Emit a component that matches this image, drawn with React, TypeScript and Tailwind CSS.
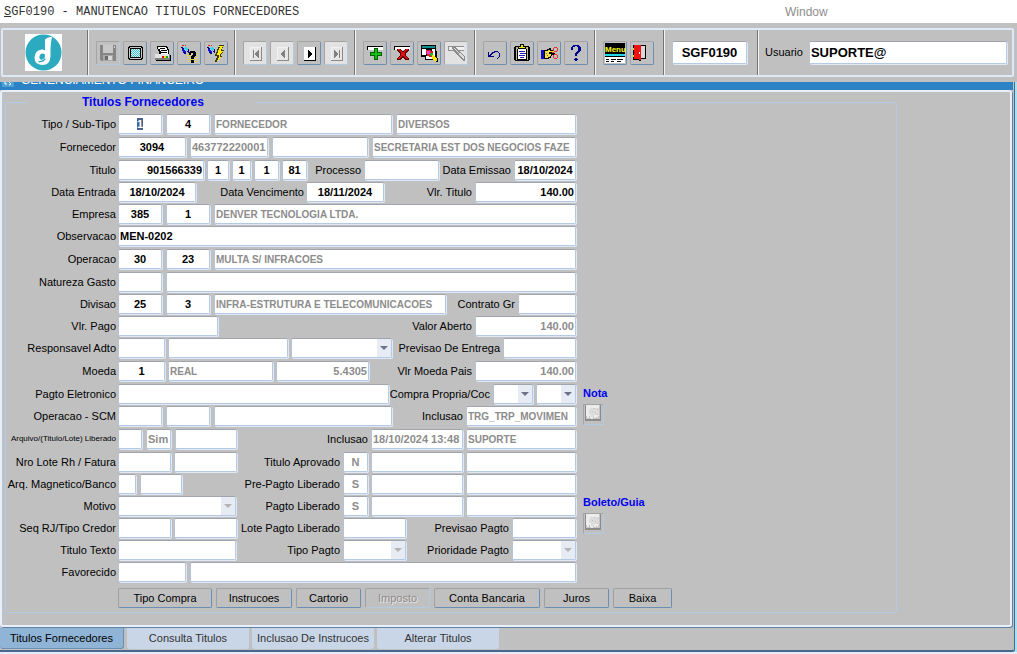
import React, { useEffect, useRef } from "react";

const sans = "font-['Liberation_Sans',Arial,sans-serif]";

const box =
  "h-5 min-w-0 rounded-[2px] border border-t-[#9fa4ad] border-l-[#b4c4d8] border-r-[#b4cae4] border-b-[#b4cae4] bg-white shadow-[1px_1px_0_#dfe8f4]";

type FieldProps = {
  id?: string;
  label?: string;
  w: string;
  value?: string;
  align?: "left" | "center" | "right";
  muted?: boolean;
  name?: boolean;
  inputRef?: React.Ref<HTMLInputElement>;
};

function Field({ id, label, w, value = "", align = "left", muted, name, inputRef }: FieldProps) {
  const a = align === "center" ? "text-center" : align === "right" ? "text-right" : "text-left";
  return (
    <input
      ref={inputRef}
      id={id}
      aria-label={label}
      type="text"
      defaultValue={value}
      readOnly={muted || name}
      className={`${box} ${w} ${a} ${muted || name ? "text-[#8c8c8c]" : "text-black"} ${name ? "text-[10px]" : "text-[11px]"} px-px leading-[15px] font-bold outline-none selection:bg-[#46628f] selection:text-white`}
    />
  );
}

function Drop({ id, label, w, off }: { id?: string; label?: string; w: string; off?: boolean }) {
  return (
    <span className={`relative flex ${w}`}>
      <select
        id={id}
        aria-label={label}
        disabled={off}
        className={`${box} w-full appearance-none border-r-[#9fa4ad] border-b-[#9fa4ad] opacity-100`}
      >
        <option></option>
      </select>
      <span className="pointer-events-none absolute inset-y-px right-px flex w-[14px] items-center justify-center bg-[#e6ebf4]">
        <svg width="8" height="4" viewBox="0 0 8 4">
          <path d="M0 0h8L4 4z" fill={off ? "#b4b4b4" : "#6c7088"} />
        </svg>
      </span>
    </span>
  );
}

function Lab({ to, w = "", children }: { to: string; w?: string; children: React.ReactNode }) {
  return (
    <label htmlFor={to} className={`${w} shrink-0 text-right text-[11px] leading-5 whitespace-nowrap text-black`}>
      {children}
    </label>
  );
}

type RowProps = {
  to: string;
  label: string;
  tall?: boolean;
  small?: boolean;
  gap?: string;
  children: React.ReactNode;
  right?: React.ReactNode;
};

function Row({ to, label, tall, small, gap = "gap-1", children, right }: RowProps) {
  return (
    <div className={`flex items-start gap-[2px] ${tall ? "h-[23px]" : "h-[22px]"}`}>
      <label
        htmlFor={to}
        className={`w-[110px] shrink-0 text-right leading-5 whitespace-nowrap text-black ${small ? "text-[8px]" : "text-[11px]"}`}
      >
        {label}
      </label>
      <div className="flex min-w-0 flex-1 justify-between">
        <div className={`flex ${right ? "" : "min-w-0 flex-1"} ${gap}`}>{children}</div>
        {right && <div className="flex gap-[3px]">{right}</div>}
      </div>
    </div>
  );
}

function Tool({ label, off, pale, children }: { label: string; off?: boolean; pale?: boolean; children: React.ReactNode }) {
  return (
    <button
      type="button"
      aria-label={label}
      disabled={off}
      className={`flex size-6 items-center justify-center rounded-[2px] border border-t-[#a4a4a4] border-l-[#a4a4a4] ${off ? "border-r-[#b4cae4] border-b-[#b4cae4]" : "border-r-[#6a8eb4] border-b-[#6a8eb4]"} ${pale ? "bg-[#e2e2e2]" : "bg-[#c0c0c0]"}`}
    >
      <svg className="size-6 shrink-0" viewBox="0 0 24 24" shapeRendering="crispEdges">
        {children}
      </svg>
    </button>
  );
}

function Group({ pad = "pr-[6px]", children }: { pad?: string; children: React.ReactNode }) {
  return (
    <div className={`mr-px flex items-center gap-[3px] border-r border-r-[#747474] pl-[7px] ${pad} shadow-[1px_0_0_#f4f4f4]`}>
      {children}
    </div>
  );
}

function NavTile({ off, children }: { off?: boolean; children: React.ReactNode }) {
  return (
    <>
      <path d="M7 6h12v14H7z" fill={off ? "#8a8a8a" : "#000"} />
      <path d="M7 6h11v13H7z" fill={off ? "#f2f2f2" : "#fff"} />
      <path d="M8 7h10v12H8z" fill={off ? "#e6e6e6" : "#fff"} />
      <g fill={off ? "#808080" : "#000"}>{children}</g>
    </>
  );
}

function Torch({ x = 0 }: { x?: number }) {
  return (
    <g transform={`translate(${x} 0)`}>
      <path d="M5 4h2v1H5z M8 4h1v1H8z" fill="#e02020" />
      <path d="M4 6h2v1h1v1H5V7H4z" fill="#000080" />
      <path d="M8 6h2v1h1v2h-1v1H9V9H8V8H7V7h1z" fill="#30d8f0" />
      <path d="M5 8h2v1h1v1h1v2H8v-1H6v-1H5z" fill="#1010e0" />
      <path d="M11 8h1v4h-1v-1h-1v-1h1z M6 11h2v1h1v1H7v-1H6z" fill="#000080" />
    </g>
  );
}

function Blotch() {
  return (
    <svg className="h-[17px] w-[17px] shrink-0" viewBox="0 0 17 17" shapeRendering="crispEdges">
      <path d="M1 0h16v16H1z" fill="#8c8c8c" />
      <path d="M2 0h14v14H2z" fill="#c4c4c4" />
      <path d="M2 0h13v11h-1v2h-1v-1h-1v1h-2v-1H9v2H7v-1H6v-2H5v2H3v-2H2z" fill="#ececec" />
      <path d="M6 3h9v7h-5v2H7V9H5V5h1z" fill="#dcdcdc" />
      <path d="M10 3h1v1h-1z M13 4h1v1h-1z M8 6h1v1H8z M11 7h1v1h-1z M13 9h1v1h-1z" fill="#c0c0c0" />
    </svg>
  );
}

function Side({ title }: { title: string }) {
  return (
    <div className="flex flex-col items-start gap-1">
      <span className="text-[11px] leading-[13px] font-bold whitespace-nowrap text-[#0000f0]">{title}</span>
      <button
        type="button"
        aria-label={title}
        className="flex size-[21px] items-start justify-start border border-t-[#a4a4a4] border-l-[#a4a4a4] border-r-[#b4cae4] border-b-[#b4cae4]"
      >
        <Blotch />
      </button>
    </div>
  );
}

const actions = [
  { t: "Tipo Compra", w: "w-[94px]" },
  { t: "Instrucoes", w: "w-[76px]" },
  { t: "Cartorio", w: "w-[65px]" },
  { t: "Imposto", w: "w-[65px]", off: true },
  { t: "Conta Bancaria", w: "w-[106px]" },
  { t: "Juros", w: "w-[65px]" },
  { t: "Baixa", w: "w-[59px]" },
];

const tabs = ["Titulos Fornecedores", "Consulta Titulos", "Inclusao De Instrucoes", "Alterar Titulos"];

function Toolbar() {
  return (
    <div className="mx-px mr-[3px] flex h-[49px] rounded-[2px] border-2 border-[#dfe8f6]">
      <div className="mr-px flex w-[85px] items-center justify-center border-r border-r-[#747474] pr-[3px] shadow-[1px_0_0_#f4f4f4]">
        <svg className="size-[37px] shrink-0" viewBox="0 0 37 37">
          <path d="M0 0h37v37H0z" fill="#fff" />
          <circle cx="18.5" cy="18.5" r="18" fill="#2cabc0" />
          <path
            d="M20 5.500Q22.500 2.500 27 3Q25.500 9 25.500 18V22Q25.500 31 17 31Q9.500 30.500 9.500 23.500Q10 16 17 15.500Q19 15.500 20 16.500ZM20 20.500Q17.500 18.500 15.300 20.500Q13.300 23.500 15.500 25.500Q18 26.500 19.800 23.500Z"
            fill="#fff"
            fillRule="evenodd"
          />
          <path d="M13.500 27.500Q18 28.500 20.300 24.500" stroke="#2cabc0" strokeWidth="1.300" fill="none" />
        </svg>
      </div>
      <Group>
        <Tool label="Salvar" off>
          <path d="M4 4h16v16H5v-1H4z" fill="#868686" />
          <path d="M7 4h10v8H7z" fill="#c8c8c8" />
          <path d="M7 14h10v6H7z" fill="#a8a8a8" />
          <path d="M9 15h3v4H9z" fill="#6c6c6c" />
          <path d="M18 5h1v2h-1z M12 15h4v4h-4z" fill="#d8d8d8" />
        </Tool>
        <Tool label="Tela">
          <path d="M6 5h13v1h1v12h-1v1H6v-1H5V6h1z" fill="#000" />
          <path d="M7 6h11v1h1v10h-1v1H7v-1H6V7h1z" fill="#c8c8c8" />
          <path d="M7 7h11v10H7z" fill="#000" />
          <path d="M8 8h9v8H8z" fill="#d8f0f0" />
          <path d="M8 8.500h9 M8 10.500h9 M8 12.500h9 M8 14.500h9" stroke="#40c0c8" strokeDasharray="1 1" />
          <path d="M9 9.500h8 M9 11.500h8 M9 13.500h8 M9 15.500h8" stroke="#40c0c8" strokeDasharray="1 1" />
        </Tool>
        <Tool label="Imprimir">
          <path d="M7 5h10v1h1v2h1v5H9v-3H8V8H7z" fill="#000" />
          <path d="M8 6h8v1h1v2h1v4h-7v-3h-1V8H8z" fill="#fff" />
          <path d="M10 7h5v1h-5z M11 9h6v1h-6z M11 11h6v1h-6z" fill="#000" />
          <path d="M5 13h15v1h1v5H5z" fill="#808080" />
          <path d="M5 13h14v4H5z" fill="#e4e4e4" />
          <path d="M6 19h15v1H6z M20 14h1v5h-1z" fill="#000" />
          <path d="M12 15h2v2h-2z" fill="#e00000" />
          <path d="M14 15h2v2h-2z" fill="#f0f000" />
          <path d="M16 15h2v2h-2z" fill="#00b000" />
        </Tool>
        <Tool label="Consultar">
          <path
            d="M11 12.500h10 M10 14.500h11 M11 16.500h10 M10 18.500h11 M11 20.500h10"
            stroke="#f0e000"
            strokeDasharray="1 1"
          />
          <Torch />
          <path d="M13 10h5v1h1v4h-1v1h-1v2h-3v-3h1v-1h1v-2h-2v2h-2v-3h1z M14 19h3v3h-3z" fill="#000" />
        </Tool>
        <Tool label="Executar consulta">
          <Torch x={-1} />
          <path
            d="M15 4h5v1h-1v2h-1v2h2v1h-1v2h-1v1h-1v2h1v1h-1v1h-1v1h-1v1h-1v1h-1v1h-2v-2h1v-2h1v-2h-2v-2h1v-2h1V8h1V6h1z"
            fill="#403800"
          />
          <path
            d="M15 5h4v1h-1v2h-1v2h2v1h-1v1h-1v1h-1v3h1v1h-1v1h-1v1h-1v1h-1v-1h1v-2h1v-3h-2v-2h1V9h1V7h1z"
            fill="#ffee00"
          />
        </Tool>
      </Group>
      <Group>
        <Tool label="Primeiro" off pale>
          <NavTile off>
            <path d="M10 9h1v8h-1z M15 9h1v8h-1v-1h-1v-1h-1v-1h-1v-2h1v-1h1v-1h1z" />
          </NavTile>
        </Tool>
        <Tool label="Anterior" off pale>
          <NavTile off>
            <path d="M14 9h1v8h-1v-1h-1v-1h-1v-1h-1v-2h1v-1h1v-1h1z" />
          </NavTile>
        </Tool>
        <Tool label="Proximo">
          <NavTile>
            <path d="M11 9h1v1h1v1h1v1h1v2h-1v1h-1v1h-1v1h-1z" />
          </NavTile>
        </Tool>
        <Tool label="Ultimo" off pale>
          <NavTile off>
            <path d="M15 9h1v8h-1z M10 9h1v1h1v1h1v1h1v2h-1v1h-1v1h-1v1h-1z" />
          </NavTile>
        </Tool>
      </Group>
      <Group>
        <Tool label="Inserir">
          <path d="M4 5h16v4H4z" fill="#000" />
          <path d="M5 6h15v3H5z" fill="#fff" />
          <path d="M11 7h4v4h4v4h-4v4h-4v-4H7v-4h4z" fill="#006000" />
          <path d="M12 8h2v4h4v2h-4v4h-2v-4H8v-2h4z" fill="#10c010" />
        </Tool>
        <Tool label="Excluir">
          <path d="M4 5h16v4H4z" fill="#000" />
          <path d="M5 6h15v3H5z" fill="#fff" />
          <path
            d="M7 8h4v1h1v1h2V9h1V8h4v2h-1v1h-1v1h-1v3h1v1h1v1h1v2h-4v-1h-1v-1h-2v1h-1v1H7v-2h1v-1h1v-1h1v-3H9v-1H8v-1H7z"
            fill="#600000"
          />
          <path
            d="M8 8h2v1h1v1h1v1h2v-1h1V9h1V8h2v1h-1v1h-1v1h-1v4h1v1h1v1h1v1h-2v-1h-1v-1h-1v-1h-2v1h-1v1h-1v1H8v-1h1v-1h1v-1h1v-4h-1v-1H9V9H8z"
            fill="#d81010"
          />
        </Tool>
        <Tool label="Localizar">
          <path d="M4 4h15v6h1v7h-1v2H8v-3H4z" fill="#000" />
          <path d="M5 5h13v2H5z" fill="#109090" />
          <path d="M5 8h4v6H5z M9 15h9v3H9z M15 8h3v8h-3z" fill="#fff" />
          <path d="M9 9h5v1h2v4h-1v2h-3v-1h-2v-2H9z" fill="#e02020" />
          <path d="M10 10h3v3h-3z" fill="#e040e0" />
          <path d="M13 12h3v3h-3z" fill="#20b030" />
          <path d="M15 14h2v1h1v1h1v1h1v3h-3v-1h-1v-1h-1z" fill="#f0e800" />
          <path d="M19 16h1v1h1v4h-2v-1h1v-3h-1z" fill="#000" />
        </Tool>
        <Tool label="Limpar consulta" off pale>
          <path d="M4 5h16v5H4z" fill="#909090" />
          <path d="M5 6h15v3H5z" fill="#f0f0f0" />
          <path
            d="M8 6h4v1h1v1h1v1h1v1h1v1h1v1h1v1h1v1h1v1h1v5h-2v-1h-1v-1h-1v-1h-1v-1h-1v-1h-1v-1h-1v-1h-1v-1h-1v-1h-1v-1h-1v-1H9v-1H8z"
            fill="#8c8c8c"
          />
          <path
            d="M10 7h1v1h1v1h1v1h1v1h1v1h-1v-1h-1v-1h-1V9h-1V8h-1z M15 12h2v1h1v1h1v1h1v3h-1v-1h-1v-1h-1v-1h-1v-1h-1z"
            fill="#dcdcdc"
          />
        </Tool>
      </Group>
      <Group>
        <Tool label="Desfazer">
          <path
            d="M5 11h1v3h1v-1h1v-1h1v-1h2v-1h4v1h1v1h1v4h-1v1h-1v1h-1v-1h1v-1h1v-4h-1v-1h-3v1h-2v1H9v1H8v1h3v1H5z"
            fill="#000080"
          />
        </Tool>
        <Tool label="Area de transferencia">
          <path d="M5 5h14v1h1v13h-1v1H5v-1H4V6h1z" fill="#000" />
          <path d="M6 6h12v13H6z" fill="#c0b890" />
          <path d="M7 8h10v11H7z" fill="#000" />
          <path d="M8 8h8v10H8z" fill="#fff" />
          <path d="M10 3h4v2h2v3H8V5h2z" fill="#000" />
          <path d="M11 4h2v2h2v1H9V6h2z" fill="#f0e800" />
          <path d="M9 10h6v1H9z M10 12h6v1h-6z M9 14h6v1H9z M10 16h4v1h-4z" fill="#2020c0" />
        </Tool>
        <Tool label="Recortar">
          <path d="M4 9h3v9H4z" fill="#1010c0" />
          <path d="M7 9h3V8h2V7h2v2h4v2h-3v1h3v2h-3v1h-1v2h-2v1H7z" fill="#000" />
          <path d="M8 10h3V9h2v1h4v1h-5v2h2v2h-1v1h-2v1H8z" fill="#f0e050" />
          <path d="M9 12h1v1H9z M10 14h1v1h-1z" fill="#907020" />
          <path d="M17 6h3v1h1v3h-1v1h-3v1h-2v-1h2v-1h-1V7h1z M17 13h3v1h1v3h-1v1h-3v-1h-1v-3h1z" fill="#e83030" />
          <path d="M17 7h3v3h-3z M17 14h3v3h-3z" fill="#c0c0c0" />
        </Tool>
        <Tool label="Ajuda">
          <path
            d="M9 4h6v1h1v1h1v4h-1v1h-1v1h-1v1h-1v2h-2v-3h1v-1h1v-1h1V6h-1V5h-2v1H9v3H7V6h1V5h1z M11 17h2v1h1v1h-1v1h-2v-1h-1v-1h1z"
            fill="#000090"
          />
        </Tool>
      </Group>
      <Group pad="pr-[9px]">
        <Tool label="Menu">
          <path d="M2 2h20v12H2z" fill="#000" />
          <path d="M2 14h20v8H2z" fill="#fff" />
          <path d="M2 13h20v2H2z" fill="#20d8e8" />
          <path d="M2 15h20v1H2z" fill="#000" />
          <path d="M3 18h3v1H3z M8 18h5v1H8z M14 18h6v1h-6z M3 20h3v1H3z M8 20h3v1H8z M14 20h4v1h-4z" fill="#000" />
          <text x="2" y="11" fontSize="8" fontWeight="700" fontFamily="Liberation Sans" fill="#ffff00">
            Menu
          </text>
        </Tool>
        <Tool label="Sair">
          <path d="M3 4h13v14h-5v2H9v-1H3z" fill="#000" />
          <path d="M11 5h4v12h-4z" fill="#d8d8d8" />
          <path d="M4 4h7v15H9v-1H4z" fill="#f01010" />
          <path d="M3 7h1v2H3z M3 14h1v2H3z" fill="#f0e000" />
          <path d="M9 11h1v2H9z" fill="#fff" />
        </Tool>
      </Group>
      <div className="mr-px flex items-center border-r border-r-[#747474] pr-[10px] pl-[7px] shadow-[1px_0_0_#f4f4f4]">
        <input
          aria-label="Programa"
          defaultValue="SGF0190"
          className="h-[23px] w-[75px] rounded-[2px] border border-t-[#9fa4ad] border-l-[#b4c4d8] border-r-[#b4cae4] border-b-[#b4cae4] bg-white text-center text-[13px] font-bold text-black shadow-[1px_1px_0_#dfe8f4] outline-none"
        />
      </div>
      <div className="flex min-w-0 flex-1 items-center gap-[6px] pr-[5px] pl-[6px]">
        <label htmlFor="usuario" className="text-[11px] text-black">
          Usuario
        </label>
        <input
          id="usuario"
          defaultValue="SUPORTE@"
          className="h-[23px] min-w-0 flex-1 rounded-[2px] border border-t-[#9fa4ad] border-l-[#b4c4d8] border-r-[#b4cae4] border-b-[#b4cae4] bg-white px-px text-[13px] font-bold text-black shadow-[1px_1px_0_#dfe8f4] outline-none"
        />
      </div>
    </div>
  );
}

export default function App() {
  const first = useRef<HTMLInputElement>(null);
  useEffect(() => {
    first.current?.focus();
    first.current?.select();
  }, []);

  return (
    <div className={`${sans} flex min-h-screen flex-col bg-[#c0c0c0] text-black`}>
      <header className="flex h-[23px] items-center bg-white pl-1">
        <h1 className="w-[781px] font-['Liberation_Mono',monospace] text-[12px] text-[#333333]">
          <u>S</u>GF0190 - MANUTENCAO TITULOS FORNECEDORES
        </h1>
        <span className="text-[12px] text-[#8e8e8e]">Window</span>
      </header>

      <div className="pt-[5px] pb-[5px]">
        <Toolbar />
      </div>

      <div className="flex flex-1 bg-[#a4e4f0]">
        <div className="flex min-w-0 flex-1 flex-col rounded-br-[3px] border-r border-b-2 border-[#4a688f] bg-[#c0c0c0]">
          <div className="mr-px flex h-[8px] items-end gap-[7px] overflow-hidden bg-[#2b82c4] pb-[3px] pl-[2px]">
            <svg className="h-[5px] w-3 shrink-0" viewBox="0 0 12 5">
              <path d="M0 0h12v5H0z" fill="#4fa0d8" />
              <path d="M3 0v2h2M7 0l2 2-2 1" stroke="#fff" fill="none" />
            </svg>
            <span className="text-[12px] leading-[14px] whitespace-nowrap text-white">GERENCIAMENTO FINANCEIRO</span>
          </div>
          <main className="mr-[2px] flex-1 rounded-[3px] border-2 border-[#e9eff9] pt-[2px] shadow-[1px_1px_0_#5f82a8,inset_1px_0_0_#b8c4d4]">
            <fieldset className="ml-[3px] w-[892px] max-w-full rounded-[3px] border border-[#b4cae4] pb-[4px]">
              <legend className="ml-[22px] w-[227px] pl-[54px] text-[12px] leading-4 font-bold text-[#0000f0]">
                Titulos Fornecedores
              </legend>
              <div className="flex gap-[7px] pt-[4px]">
                <div className="w-[570px] shrink-0">
                  <Row to="tipo" label="Tipo / Sub-Tipo" tall>
                    <Field inputRef={first} id="tipo" w="w-11" value="1" align="center" />
                    <Field label="Sub-Tipo" w="w-11" value="4" align="center" />
                    <Field label="Descricao tipo" w="w-[178px]" value="FORNECEDOR" name />
                    <Field label="Descricao sub-tipo" w="flex-1" value="DIVERSOS" name />
                  </Row>
                  <Row to="fornecedor" label="Fornecedor" tall>
                    <Field id="fornecedor" w="w-[68px]" value="3094" align="center" />
                    <Field label="CNPJ" w="w-[78px]" value="4637722200012" muted />
                    <Field label="Inscricao" w="w-[96px]" muted />
                    <Field label="Nome fornecedor" w="flex-1" value="SECRETARIA EST DOS NEGOCIOS FAZE" name />
                  </Row>
                  <Row
                    to="titulo"
                    label="Titulo"
                    gap="gap-[3px]"
                    right={
                      <>
                        <Lab to="emissao">Data Emissao</Lab>
                        <Field id="emissao" w="w-[62px]" value="18/10/2024" align="center" />
                      </>
                    }
                  >
                    <Field id="titulo" w="w-[86px]" value="901566339" align="right" />
                    <Field label="Serie" w="w-[22px]" value="1" align="center" />
                    <Field label="Parcela" w="w-[19px]" value="1" align="center" />
                    <Field label="Sequencia" w="w-[25px]" value="1" align="center" />
                    <Field label="Especie" w="w-[25px]" value="81" align="center" />
                    <Lab to="processo" w="w-[51px]">Processo</Lab>
                    <Field id="processo" w="w-[75px]" />
                  </Row>
                  <Row
                    to="entrada"
                    label="Data Entrada"
                    gap="gap-[2px]"
                    right={
                      <>
                        <Lab to="vlrtitulo">Vlr. Titulo</Lab>
                        <Field id="vlrtitulo" w="w-[101px]" value="140.00" align="right" />
                      </>
                    }
                  >
                    <Field id="entrada" w="w-[78px]" value="18/10/2024" align="center" />
                    <Lab to="vencimento" w="w-[106px]">Data Vencimento</Lab>
                    <Field id="vencimento" w="w-[78px]" value="18/11/2024" align="center" />
                  </Row>
                  <Row to="empresa" label="Empresa">
                    <Field id="empresa" w="w-11" value="385" align="center" />
                    <Field label="Filial" w="w-11" value="1" align="center" />
                    <Field label="Nome empresa" w="flex-1" value="DENVER TECNOLOGIA LTDA." name />
                  </Row>
                  <Row to="obs" label="Observacao" tall>
                    <Field id="obs" w="flex-1" value="MEN-0202" />
                  </Row>
                  <Row to="operacao" label="Operacao" tall>
                    <Field id="operacao" w="w-11" value="30" align="center" />
                    <Field label="Sub-operacao" w="w-11" value="23" align="center" />
                    <Field label="Descricao operacao" w="flex-1" value="MULTA S/ INFRACOES" name />
                  </Row>
                  <Row to="natureza" label="Natureza Gasto">
                    <Field id="natureza" w="w-11" />
                    <Field label="Descricao natureza" w="flex-1" muted />
                  </Row>
                  <Row
                    to="divisao"
                    label="Divisao"
                    right={
                      <>
                        <Lab to="contrato">Contrato Gr</Lab>
                        <Field id="contrato" w="w-[58px]" />
                      </>
                    }
                  >
                    <Field id="divisao" w="w-11" value="25" align="center" />
                    <Field label="Sub-divisao" w="w-11" value="3" align="center" />
                    <Field label="Descricao divisao" w="w-[232px]" value="INFRA-ESTRUTURA E TELECOMUNICACOES" name />
                  </Row>
                  <Row
                    to="pago"
                    label="Vlr. Pago"
                    right={
                      <>
                        <Lab to="aberto">Valor Aberto</Lab>
                        <Field id="aberto" w="w-[101px]" value="140.00" align="right" muted />
                      </>
                    }
                  >
                    <Field id="pago" w="w-[100px]" />
                  </Row>
                  <Row
                    to="responsavel"
                    label="Responsavel Adto"
                    tall
                    gap="gap-[3px]"
                    right={
                      <>
                        <Lab to="entrega">Previsao De Entrega</Lab>
                        <Field id="entrega" w="w-[73px]" />
                      </>
                    }
                  >
                    <Field id="responsavel" w="w-[47px]" />
                    <Field label="Nome responsavel" w="w-[120px]" />
                    <Drop label="Tipo adiantamento" w="w-[101px]" />
                  </Row>
                  <Row
                    to="moeda"
                    label="Moeda"
                    tall
                    gap="gap-[3px]"
                    right={
                      <>
                        <Lab to="pais">Vlr Moeda Pais</Lab>
                        <Field id="pais" w="w-[101px]" value="140.00" align="right" muted />
                      </>
                    }
                  >
                    <Field id="moeda" w="w-[47px]" value="1" align="center" />
                    <Field label="Nome moeda" w="w-[105px]" value="REAL" name />
                    <Field label="Cotacao" w="w-[93px]" value="5.4305" align="right" muted />
                  </Row>
                  <Row
                    to="eletronico"
                    label="Pagto Eletronico"
                    right={
                      <>
                        <Lab to="propria">Compra Propria/Coc</Lab>
                        <Drop id="propria" w="w-10" />
                        <Drop label="Coc" w="w-10" />
                      </>
                    }
                  >
                    <Field id="eletronico" w="w-[271px]" />
                  </Row>
                  <Row
                    to="scm"
                    label="Operacao - SCM"
                    tall
                    right={
                      <>
                        <Lab to="inclusao1">Inclusao</Lab>
                        <Field id="inclusao1" w="w-[110px]" value="TRG_TRP_MOVIMEN" name />
                      </>
                    }
                  >
                    <Field id="scm" w="w-11" />
                    <Field label="SCM sub" w="w-11" />
                    <Field label="SCM descricao" w="w-[178px]" />
                  </Row>
                  <Row
                    to="arquivo"
                    label="Arquivo/(Titulo/Lote) Liberado"
                    tall
                    small
                    right={
                      <>
                        <Lab to="inclusao2">Inclusao</Lab>
                        <Field id="inclusao2" w="w-[92px]" value="18/10/2024 13:48" muted />
                        <Field label="Usuario inclusao" w="w-[110px]" value="SUPORTE" name />
                      </>
                    }
                  >
                    <Field id="arquivo" w="w-[24px]" />
                    <Field label="Liberado" w="w-[25px]" value="Sim" muted />
                    <Field label="Lote liberado" w="w-[62px]" />
                  </Row>
                  <Row
                    to="lote"
                    label="Nro Lote Rh / Fatura"
                    gap="gap-[3px]"
                    right={
                      <>
                        <Lab to="aprovado">Titulo Aprovado</Lab>
                        <Field id="aprovado" w="w-[25px]" value="N" align="center" muted />
                        <Field label="Data aprovado" w="w-[92px]" />
                        <Field label="Usuario aprovado" w="w-[110px]" />
                      </>
                    }
                  >
                    <Field id="lote" w="w-[53px]" />
                    <Field label="Fatura" w="w-[63px]" />
                  </Row>
                  <Row
                    to="arq"
                    label="Arq. Magnetico/Banco"
                    right={
                      <>
                        <Lab to="prepagto">Pre-Pagto Liberado</Lab>
                        <Field id="prepagto" w="w-[25px]" value="S" align="center" muted />
                        <Field label="Data pre-pagto" w="w-[92px]" />
                        <Field label="Usuario pre-pagto" w="w-[110px]" />
                      </>
                    }
                  >
                    <Field id="arq" w="w-[18px]" />
                    <Field label="Banco" w="w-[42px]" />
                  </Row>
                  <Row
                    to="motivo"
                    label="Motivo"
                    right={
                      <>
                        <Lab to="pagtolib">Pagto Liberado</Lab>
                        <Field id="pagtolib" w="w-[25px]" value="S" align="center" muted />
                        <Field label="Data pagto" w="w-[92px]" />
                        <Field label="Usuario pagto" w="w-[110px]" />
                      </>
                    }
                  >
                    <Drop id="motivo" w="w-[118px]" off />
                  </Row>
                  <Row
                    to="seqrj"
                    label="Seq RJ/Tipo Credor"
                    gap="gap-[3px]"
                    right={
                      <>
                        <Lab to="lotepagto">Lote Pagto Liberado</Lab>
                        <Field id="lotepagto" w="w-[63px]" />
                        <Lab to="prevpagto" w="w-[100px]">Previsao Pagto</Lab>
                        <Field id="prevpagto" w="w-16" />
                      </>
                    }
                  >
                    <Field id="seqrj" w="w-[53px]" />
                    <Field label="Tipo credor" w="w-[63px]" />
                  </Row>
                  <Row
                    to="texto"
                    label="Titulo Texto"
                    right={
                      <>
                        <Lab to="tipopagto">Tipo Pagto</Lab>
                        <Drop id="tipopagto" w="w-[63px]" off />
                        <Lab to="prioridade" w="w-[100px]">Prioridade Pagto</Lab>
                        <Drop id="prioridade" w="w-16" off />
                      </>
                    }
                  >
                    <Field id="texto" w="w-[118px]" />
                  </Row>
                  <Row to="favorecido" label="Favorecido">
                    <Field id="favorecido" w="w-[68px]" />
                    <Field label="Nome favorecido" w="flex-1" />
                  </Row>
                </div>
                <div className="flex flex-col gap-[71px] pt-[273px]">
                  <Side title="Nota" />
                  <Side title="Boleto/Guia" />
                </div>
              </div>
              <div className="mt-[4px] flex gap-[4px] pl-[112px]">
                {actions.map((b) => (
                  <button
                    key={b.t}
                    type="button"
                    disabled={b.off}
                    className={`h-5 rounded-[2px] border border-t-[#a0a0a0] border-l-[#a0a0a0] text-[11px] leading-[17px] ${b.w} ${b.off ? "border-r-[#b4cae4] border-b-[#b4cae4] text-[#8c8c8c] [text-shadow:1px_1px_0_#e8e8e8]" : "border-r-[#6a8eb4] border-b-[#6a8eb4] text-black"}`}
                  >
                    {b.t}
                  </button>
                ))}
              </div>
            </fieldset>
          </main>
          <nav className="flex h-[23px] gap-[3px] pt-px">
            {tabs.map((t, i) => (
              <button
                key={t}
                type="button"
                className={`h-[21px] rounded-b-[3px] text-[11px] ${i === 0 ? "w-[124px] border-r border-b border-[#6a8eb4] bg-[#8fb4d6] text-black" : "w-[122px] bg-[#c8d6e8] text-[#333333]"}`}
              >
                {t}
              </button>
            ))}
          </nav>
        </div>
        <div className="w-[2px]" />
      </div>
      <div className="h-[2px] bg-[#e4ecf8]" />
    </div>
  );
}
